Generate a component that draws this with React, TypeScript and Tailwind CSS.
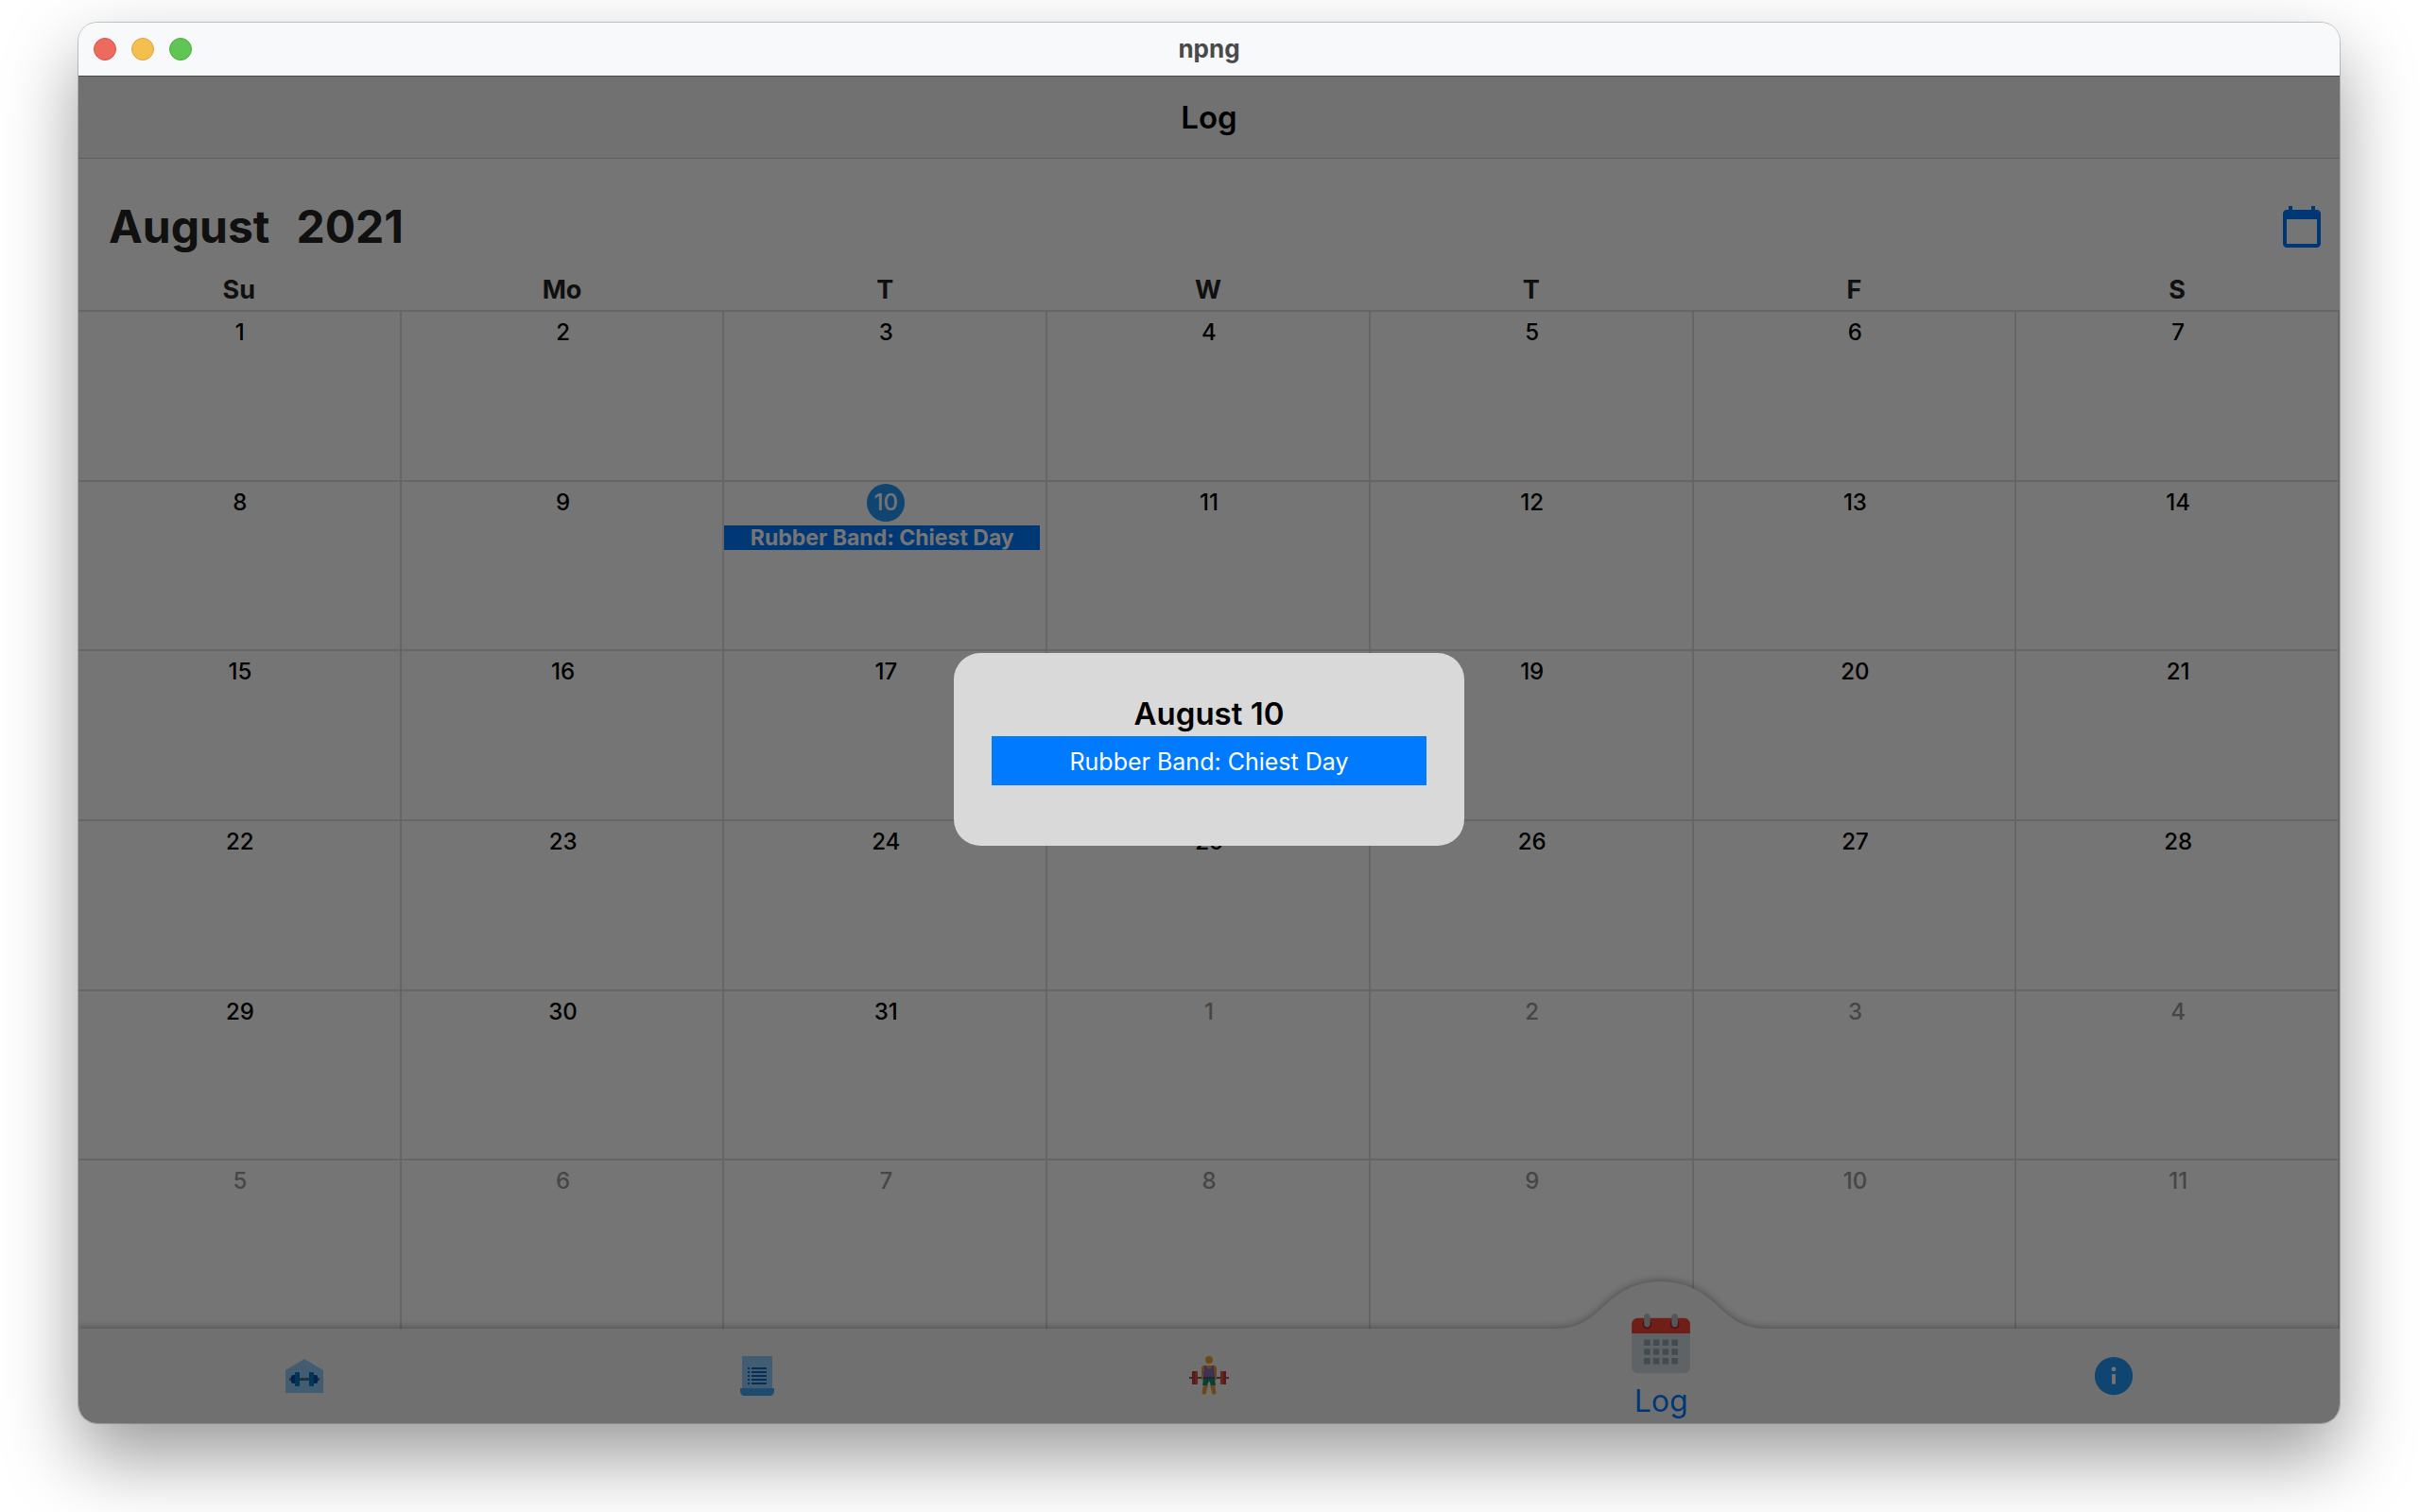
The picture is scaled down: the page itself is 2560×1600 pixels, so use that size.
import React from "react";
import { FcCalendar, FcInfo } from "react-icons/fc";
import { MdCalendarToday } from "react-icons/md";

const WEEKDAYS = ["Su", "Mo", "T", "W", "T", "F", "S"];

type Day = { label: number; outside: boolean; today: boolean; event?: string };

const DAYS: Day[] = Array.from({ length: 42 }, (_, i) => ({
  label: i < 31 ? i + 1 : i - 30,
  outside: i >= 31,
  today: i === 9,
  event: i === 9 ? "Rubber Band: Chiest Day" : undefined,
}));

const WEEKS = Array.from({ length: 6 }, (_, w) => DAYS.slice(w * 7, w * 7 + 7));

function GymIcon() {
  return (
    <svg width="40" height="36" viewBox="0 0 40 36" aria-hidden="true">
      <path d="M0 12 20 0l20 12v24H0z" fill="#90caf9" />
      <path d="M4 20h32v3H4z" fill="#546e7a" />
      <rect x="6" y="17" width="6" height="9" rx="2" fill="#0d47a1" />
      <rect x="28" y="17" width="6" height="9" rx="2" fill="#0d47a1" />
      <rect x="10" y="14" width="5" height="15" rx="1" fill="#0277bd" />
      <rect x="25" y="14" width="5" height="15" rx="1" fill="#0277bd" />
    </svg>
  );
}

function PlanIcon() {
  return (
    <svg width="36" height="42" viewBox="0 0 36 42" aria-hidden="true">
      <path d="M2 0h32v35H2z" fill="#90caf9" />
      <path d="M0 34h36v2c0 3.500-1.500 6-4 6H4c-2.500 0-4-2.500-4-6z" fill="#42a5f5" />
      <path
        d="M8 12h2v2H8zm4 0h16v2H12zM8 16h2v2H8zm4 0h16v2H12zM8 20h2v2H8zm4 0h16v2H12zM8 24h2v2H8zm4 0h16v2H12zM8 28h2v2H8zm4 0h16v2H12z"
        fill="#1565c0"
      />
    </svg>
  );
}

function LifterIcon() {
  return (
    <svg width="42" height="42" viewBox="0 0 42 42" aria-hidden="true">
      <circle cx="21" cy="4" r="4" fill="#f0a030" />
      <path d="M16 10h10c2 0 3 1 3 3v11a1.500 1.500 0 0 1-3 0v-6H16v6a1.500 1.500 0 0 1-3 0V13c0-2 1-3 3-3z" fill="#e09a48" />
      <path d="m15 29 5 1-2 9c-.4 2-4 2-4.500 0zM22 30l5-1 1.500 10c-.5 2-4 2-4.500 0z" fill="#e8a040" />
      <path d="M16 10h2c0 5 6 5 6 0h2v5l1 2v8H15v-8l1-2z" fill="#8a6cb0" />
      <path d="M15 24h12l1 7h-5l-2-5-2 5h-5z" fill="#1b8a72" />
      <path d="M0 22h13v2H0zM29 22h13v2H29z" fill="#546e7a" />
      <path d="M15 22h12v2H15z" fill="#455a64" />
      <path d="M3 16h3v14H3zM36 16h3v14h-3z" fill="#c83a34" />
      <path d="M6 16h3v14H6zM33 16h3v14h-3z" fill="#dc5040" />
    </svg>
  );
}

function TitleBar() {
  return (
    <header className="grid h-14 shrink-0 grid-cols-3 items-center bg-[#f8f9fb] px-4">
      <div className="flex gap-4">
        <button aria-label="Close" className="size-6 rounded-full border border-[#d9534b] bg-[#ec6a5e]" />
        <button aria-label="Minimize" className="size-6 rounded-full border border-[#dba53c] bg-[#f4bf4f]" />
        <button aria-label="Zoom" className="size-6 rounded-full border border-[#4faa3f] bg-[#61c554]" />
      </div>
      <div className="text-center text-[26px] leading-8 font-bold text-[#4a4a4a]">npng</div>
    </header>
  );
}

function DayCell({ day }: { day: Day }) {
  return (
    <td className="flex min-w-0 flex-col border-t-2 border-r-2 border-[#dedede] pt-0.5">
      <div className="flex h-10 items-center justify-center pl-0.5">
        <span
          className={
            day.today
              ? "flex size-10 items-center justify-center rounded-full bg-[#2196f3] text-2xl font-medium text-white"
              : day.outside
                ? "text-2xl font-medium text-[#9a9a9a]"
                : "text-2xl font-medium text-black"
          }
        >
          {day.label}
        </span>
      </div>
      {day.event && (
        <button className="mt-1 mr-1.5 bg-[#007aff] text-center text-[23px] leading-[26px] font-bold whitespace-nowrap text-white">
          {day.event}
        </button>
      )}
    </td>
  );
}

function Calendar() {
  return (
    <main className="flex min-h-0 flex-1 flex-col bg-white">
      <div className="flex h-29 shrink-0 items-center justify-between pt-7 pr-4 pl-8">
        <h2 className="flex gap-7 text-5xl leading-14 font-bold text-[#242424]">
          <span>August</span>
          <span>2021</span>
        </h2>
        <button aria-label="Go to today" className="text-[#007aff]">
          <MdCalendarToday size={48} />
        </button>
      </div>
      <table className="flex min-h-0 flex-1 flex-col">
        <thead className="block">
          <tr className="grid h-11 grid-cols-7 items-center">
            {WEEKDAYS.map((d, i) => (
              <th key={i} scope="col" className="pt-0.5 pr-0.5 text-center text-[27px] leading-8 font-bold text-[#242424]">
                {d}
              </th>
            ))}
          </tr>
        </thead>
        <tbody className="grid min-h-0 flex-1 grid-rows-6">
          {WEEKS.map((week, w) => (
            <tr key={w} className="grid grid-cols-7">
              {week.map((day, i) => (
                <DayCell key={i} day={day} />
              ))}
            </tr>
          ))}
        </tbody>
      </table>
    </main>
  );
}

function NavBar() {
  return (
    <nav className="relative grid h-[100px] shrink-0 grid-cols-5 bg-[#f5f5f5] drop-shadow-[0_-1px_4px_rgba(0,0,0,0.35)]">
      <button aria-label="Gym" className="flex items-center justify-center">
        <GymIcon />
      </button>
      <button aria-label="Plans" className="flex items-center justify-center">
        <PlanIcon />
      </button>
      <button aria-label="Workout" className="flex items-center justify-center">
        <LifterIcon />
      </button>
      <button className="relative flex flex-col items-center justify-end pb-1">
        <svg
          className="absolute bottom-full left-1/2 -mb-px -translate-x-1/2"
          width="224"
          height="51"
          viewBox="0 0 224 51"
          aria-hidden="true"
        >
          <path d="M0 51v-1c26 0 38-11 54-26C70 9 88 0 112 0s42 9 58 24c16 15 28 26 54 26v1z" fill="#f5f5f5" />
        </svg>
        <FcCalendar className="relative -mt-6 shrink-0" size={78} />
        <span className="relative text-[32px] leading-[39px] text-[#007aff]">Log</span>
      </button>
      <button aria-label="Info" className="flex items-center justify-center">
        <FcInfo size={46} />
      </button>
    </nav>
  );
}

function DayDialog() {
  return (
    <div className="absolute inset-0 flex items-center justify-center bg-black/54">
      <div
        role="dialog"
        aria-modal="true"
        aria-labelledby="dialog-title"
        className="flex w-[540px] flex-col rounded-[28px] bg-[#d9d9d9] px-10 pt-11 pb-16"
      >
        <h3 id="dialog-title" className="pb-1 text-center text-[33px] leading-10 font-semibold text-black">
          August 10
        </h3>
        <button className="h-13 bg-[#007aff] pt-0.5 text-[25px] leading-8 text-white">Rubber Band: Chiest Day</button>
      </div>
    </div>
  );
}

export default function App() {
  return (
    <div className="flex h-screen flex-col overflow-hidden bg-white pt-6 pr-[85px] pb-[94px] pl-[83px] font-['Inter',sans-serif]">
      <div className="flex min-h-0 flex-1 flex-col overflow-hidden rounded-[20px] shadow-[0_36px_80px_rgba(0,0,0,0.4),0_0_0_1px_rgba(0,0,0,0.2)]">
        <TitleBar />
        <div className="relative flex min-h-0 flex-1 flex-col">
          <div className="flex h-22 shrink-0 items-center justify-center border-t border-b border-t-[#a0a0a0] border-b-[#d0d0d0] bg-[#f6f6f6]">
            <h1 className="text-[33px] leading-10 font-semibold text-black">Log</h1>
          </div>
          <Calendar />
          <NavBar />
          <DayDialog />
        </div>
      </div>
    </div>
  );
}
